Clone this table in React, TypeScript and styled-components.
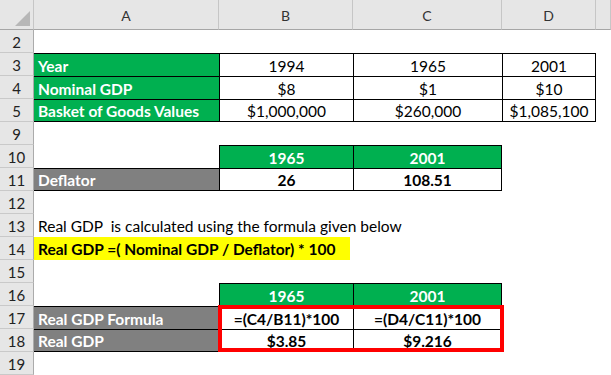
import styled, { createGlobalStyle } from "styled-components";

const GlobalStyle = createGlobalStyle`
  html, body {
    margin: 0;
    padding: 0;
    background: #ffffff;
  }
`;

const GREEN = "#00b050";
const GRAY = "#808080";
const YELLOW = "#ffff00";

const Sheet = styled.div`
  display: grid;
  grid-template-columns: 34px 185px 134px 149px 94px 1fr;
  grid-template-rows: 30px repeat(15, 23px);
  width: 611px;
  height: 375px;
  overflow: hidden;
  font-family: Lato, "Liberation Sans", sans-serif;
  color: #000;
`;

const Corner = styled.div`
  background: #e6e6e6;
  border-right: 1px solid #c6c6c6;
  border-bottom: 1px solid #a6a6a6;
  box-sizing: border-box;
  display: flex;
  align-items: flex-end;
  justify-content: flex-end;
  padding: 0 3px 3px 0;
`;

const ColHeader = styled.div`
  background: #e6e6e6;
  border-right: 1px solid #c6c6c6;
  border-bottom: 1px solid #a6a6a6;
  box-sizing: border-box;
  display: flex;
  align-items: center;
  justify-content: center;
  font-size: 14px;
  color: #333;
  padding-top: 1px;
`;

const RowNum = styled.div`
  background: #e6e6e6;
  border-right: 1px solid #ababab;
  border-bottom: 1px solid #c9c9c9;
  box-sizing: border-box;
  display: flex;
  align-items: center;
  justify-content: center;
  font-size: 15px;
  color: #222;
  padding-top: 1px;
`;

type CellProps = {
  $fill?: string;
  $bold?: boolean;
  $center?: boolean;
  $light?: boolean;
  $span?: number;
  $inset?: number;
  $top?: boolean;
  $left?: boolean;
  $right?: boolean;
  $bottom?: boolean;
};

const Cell = styled.div<CellProps>`
  grid-column: span ${(p) => p.$span ?? 1};
  margin-right: ${(p) => p.$inset ?? 0}px;
  background: ${(p) => p.$fill ?? "transparent"};
  color: ${(p) => (p.$light ? "#ffffff" : "#000000")};
  font-weight: ${(p) => (p.$bold ? 700 : 400)};
  font-size: 15.5px;
  box-sizing: border-box;
  display: flex;
  align-items: center;
  justify-content: ${(p) => (p.$center ? "center" : "flex-start")};
  padding: 1px 4px 0;
  white-space: nowrap;
  border-top: ${(p) => (p.$top ? "1px solid #000" : "none")};
  border-left: ${(p) => (p.$left ? "1px solid #000" : "none")};
  border-right: ${(p) => (p.$right ? "1px solid #000" : "none")};
  border-bottom: ${(p) => (p.$bottom ? "1px solid #000" : "none")};
`;

/* B17:C18 block with the red outline drawn over it */
const Highlight = styled.div`
  grid-column: 3 / 5;
  grid-row: 14 / 16;
  display: grid;
  grid-template-columns: 134px 149px;
  grid-template-rows: 23px 23px;
  position: relative;

  &::after {
    content: "";
    position: absolute;
    inset: -1px -2px 0 -1px;
    border: 4px solid #ff0000;
    pointer-events: none;
  }
`;

const CornerMark = () => (
  <svg width="15" height="15" viewBox="0 0 15 15">
    <polygon points="15,0 15,15 0,15" fill="#b7b7b7" />
  </svg>
);

const inputs = [
  { label: "Year", values: ["1994", "1965", "2001"] },
  { label: "Nominal GDP", values: ["$8", "$1", "$10"] },
  { label: "Basket of Goods Values", values: ["$1,000,000", "$260,000", "$1,085,100"] },
];

function YearHeads({ row }: { row: number }) {
  return (
    <>
      <RowNum>{row}</RowNum>
      <Cell />
      <Cell $fill={GREEN} $light $bold $center $top $left>
        1965
      </Cell>
      <Cell $fill={GREEN} $light $bold $center $top $left $right>
        2001
      </Cell>
      <Cell $span={2} />
    </>
  );
}

export default function App() {
  return (
    <>
      <GlobalStyle />
      <Sheet>
        <Corner>
          <CornerMark />
        </Corner>
        {["A", "B", "C", "D", ""].map((c, i) => (
          <ColHeader key={i}>{c}</ColHeader>
        ))}

        <RowNum>2</RowNum>
        <Cell $span={5} />

        {inputs.map((r, i) => {
          const last = i === inputs.length - 1;
          return [
            <RowNum key={"n" + i}>{i + 3}</RowNum>,
            <Cell key={"a" + i} $fill={GREEN} $light $bold $top $bottom={last}>
              {r.label}
            </Cell>,
            ...r.values.map((v, j) => (
              <Cell key={"v" + i + j} $center $top $left $right={j === 2} $bottom={last}>
                {v}
              </Cell>
            )),
            <Cell key={"e" + i} />,
          ];
        })}

        <RowNum>9</RowNum>
        <Cell $span={5} />

        <YearHeads row={10} />

        <RowNum>11</RowNum>
        <Cell $fill={GRAY} $light $bold $top $bottom>
          Deflator
        </Cell>
        <Cell $bold $center $top $left $bottom>
          26
        </Cell>
        <Cell $bold $center $top $left $right $bottom>
          108.51
        </Cell>
        <Cell $span={2} />

        <RowNum>12</RowNum>
        <Cell $span={5} />

        <RowNum>13</RowNum>
        <Cell $span={5}>Real GDP&nbsp; is calculated using the formula given below</Cell>

        <RowNum>14</RowNum>
        <Cell $span={2} $inset={3} $fill={YELLOW} $bold>
          Real GDP =( Nominal GDP / Deflator) * 100
        </Cell>
        <Cell $span={3} />

        <RowNum>15</RowNum>
        <Cell $span={5} />

        <YearHeads row={16} />

        <RowNum>17</RowNum>
        <Cell $fill={GRAY} $light $bold $top>
          Real GDP Formula
        </Cell>
        <Cell $span={2} />

        <RowNum>18</RowNum>
        <Cell $fill={GRAY} $light $bold $top $bottom>
          Real GDP
        </Cell>
        <Cell $span={2} />

        <RowNum>19</RowNum>
        <Cell $span={5} />

        <Highlight>
          <Cell $bold $center $top $left>
            =(C4/B11)*100
          </Cell>
          <Cell $bold $center $top $left $right>
            =(D4/C11)*100
          </Cell>
          <Cell $bold $center $top $left $bottom>
            $3.85
          </Cell>
          <Cell $bold $center $top $left $right $bottom>
            $9.216
          </Cell>
        </Highlight>
      </Sheet>
    </>
  );
}
